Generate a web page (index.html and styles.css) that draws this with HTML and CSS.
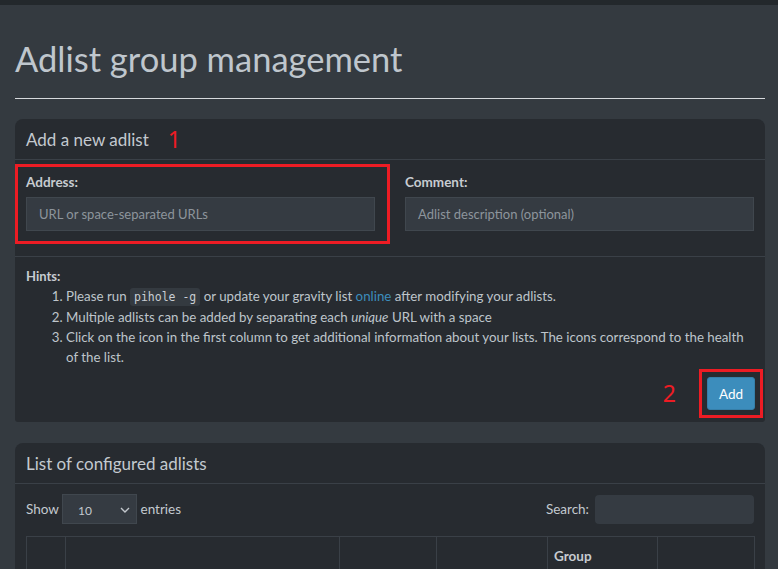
FILE: index.html
```html
<!DOCTYPE html>
<html>
<head>
<meta charset="utf-8">
<link rel="stylesheet" href="styles.css">
</head>
<body>
<div class="topbar"></div>
<div class="content">
  <h1 class="page-title">Adlist group management</h1>
  <hr class="rule">

  <section class="card">
    <div class="card-header">
      <h3 class="card-title">Add a new adlist</h3>
      <span class="marker marker-1">1</span>
    </div>
    <div class="card-body form-row">
      <div class="highlight highlight-address"></div>
      <div class="field">
        <label class="field-label">Address:</label>
        <div class="input"><span class="placeholder">URL or space-separated URLs</span></div>
      </div>
      <div class="field">
        <label class="field-label">Comment:</label>
        <div class="input"><span class="placeholder">Adlist description (optional)</span></div>
      </div>
    </div>
    <div class="card-footer">
      <strong class="hints-title">Hints:</strong>
      <ol class="hints">
        <li>Please run <code class="code">pihole -g</code> or update your gravity list <a class="link">online</a> after modifying your adlists.</li>
        <li>Multiple adlists can be added by separating each <em>unique</em> URL with a space</li>
        <li>Click on the icon in the first column to get additional information about your lists. The icons correspond to the health of the list.</li>
      </ol>
      <div class="actions">
        <span class="marker marker-2">2</span>
        <div class="highlight-btn">
          <button class="btn">Add</button>
        </div>
      </div>
    </div>
  </section>

  <section class="card">
    <div class="card-header">
      <h3 class="card-title">List of configured adlists</h3>
    </div>
    <div class="card-body table-body">
      <div class="table-controls">
        <div class="length">Show <span class="select">10<svg class="chev" width="10" height="6" viewBox="0 0 10 6"><path d="M1 1l4 4 4-4" fill="none" stroke="#c2c7cc" stroke-width="1.4"/></svg></span> entries</div>
        <div class="search">Search: <span class="search-input"></span></div>
      </div>
      <table class="table">
        <thead>
          <tr>
            <th class="c1"><span class="sort">⇅</span></th>
            <th class="c2">Address<span class="sort">⇅</span></th>
            <th class="c3">Status<span class="sort">⇅</span></th>
            <th class="c4">Comment<span class="sort">⇅</span></th>
            <th class="c5">Group assignment<span class="sort">⇅</span></th>
            <th class="c6">Action</th>
          </tr>
        </thead>
      </table>
    </div>
  </section>
</div>
</body>
</html>
```

FILE: styles.css
```css
* { box-sizing: border-box; }
html, body { margin: 0; padding: 0; }
body {
  background: #343a40;
  color: #bec5cb;
  font-family: "Lato", "Noto Sans", sans-serif;
  font-size: 14px;
  overflow: hidden;
}
.topbar { height: 5px; background: #23282c; }
.content { padding: 0 13px 0 15px; }
.page-title {
  margin: 0;
  padding-top: 34px;
  font-weight: 400;
  font-size: 34.5px;
  line-height: 40px;
  color: #bfc6cd;
}
.rule {
  margin: 19px 0 20px;
  border: 0;
  border-top: 1px solid #d6d9dc;
  height: 0;
}
.card {
  background: #272b30;
  border-radius: 8px 8px 3px 3px;
  margin-bottom: 21px;
  position: relative;
}
.card-header {
  display: flex;
  align-items: center;
  height: 41px;
  padding: 0 11px;
  border-bottom: 1px solid #3a4047;
}
.card-title {
  margin: 0;
  font-weight: 400;
  font-size: 17px;
  color: #c3c9cf;
}
.marker {
  color: #ed1c24;
  font-family: "Noto Sans", sans-serif;
  font-size: 23px;
  line-height: 1;
}
.marker-1 { margin-left: 19px; }
.card-body { padding: 14px 11px 25px; position: relative; }
.form-row {
  display: grid;
  grid-template-columns: 1fr 1fr;
  column-gap: 30px;
  border-bottom: 1px solid #3a4047;
}
.highlight {
  position: absolute;
  left: 0;
  top: 4px;
  width: 375px;
  height: 80px;
  border: 3px solid #ed1c24;
}
.field-label {
  display: block;
  font-weight: 700;
  font-size: 13.5px;
  color: #c7ccd1;
  line-height: 17px;
  margin-bottom: 6px;
}
.input {
  height: 34px;
  background: #353b42;
  border: 1px solid #40474e;
  padding: 0 12px;
  display: flex;
  align-items: center;
}
.placeholder { color: #8d959c; font-size: 13px; }
.card-footer { padding: 10px 11px 12px; }
.hints-title {
  display: block;
  font-size: 13px;
  line-height: 18px;
  color: #c7ccd1;
}
.hints {
  margin: 1px 0 0;
  padding-left: 40px;
  font-size: 13.3px;
  line-height: 20px;
  color: #bec5cb;
}
.code {
  font-family: "DejaVu Sans Mono", monospace;
  font-size: 11.5px;
  background: #343a40;
  border-radius: 3px;
  padding: 2px 4px;
  color: #c9ced3;
}
.link { color: #3c8dbc; }
.actions {
  display: flex;
  justify-content: flex-end;
  align-items: center;
  margin-top: 10px;
}
.marker-2 { margin-right: 23px; }
.highlight-btn {
  border: 3px solid #ed1c24;
  padding: 5px;
  margin-right: -9px;
  margin-top: -8px;
  margin-bottom: -8px;
}
.btn {
  display: block;
  height: 33px;
  width: 48px;
  background: #3c8dbc;
  border: 1px solid #367fa9;
  border-radius: 3px;
  color: #fff;
  font-family: "Lato", sans-serif;
  font-size: 13.5px;
  padding: 0;
}
.table-body { padding: 10px 11px 0; }
.table-controls {
  display: flex;
  justify-content: space-between;
  align-items: center;
  font-size: 13.5px;
  color: #c3c9cf;
}
.length { display: flex; align-items: center; white-space: pre; }
.select {
  display: inline-flex;
  align-items: center;
  justify-content: space-between;
  width: 75px;
  height: 30px;
  padding: 2px 6px 0 15px;
  background: #353b42;
  border: 1px solid #40474e;
  font-size: 12px;
}
.search { display: flex; align-items: center; }
.search-input {
  display: inline-block;
  width: 159px;
  height: 29px;
  margin-left: 6px;
  background: #353b42;
  border-radius: 4px;
}
.table {
  margin-top: 12px;
  width: 100%;
  border-collapse: collapse;
  table-layout: fixed;
}
.table th {
  border: 1px solid #3a4047;
  border-bottom: 0;
  height: 57px;
  vertical-align: bottom;
  text-align: left;
  font-size: 13.5px;
  font-weight: 700;
  color: #c7ccd1;
  padding: 8px 26px 8px 6px;
  line-height: 20px;
  position: relative;
}
.c1 { width: 39px; }
.c2 { width: 274px; }
.c3 { width: 97px; }
.c4 { width: 111px; }
.c5 { width: 110px; }
.c6 { width: 97px; }
.sort {
  position: absolute;
  right: 8px;
  bottom: 8px;
  font-size: 12px;
  color: #6e767e;
  font-weight: 400;
}
```
